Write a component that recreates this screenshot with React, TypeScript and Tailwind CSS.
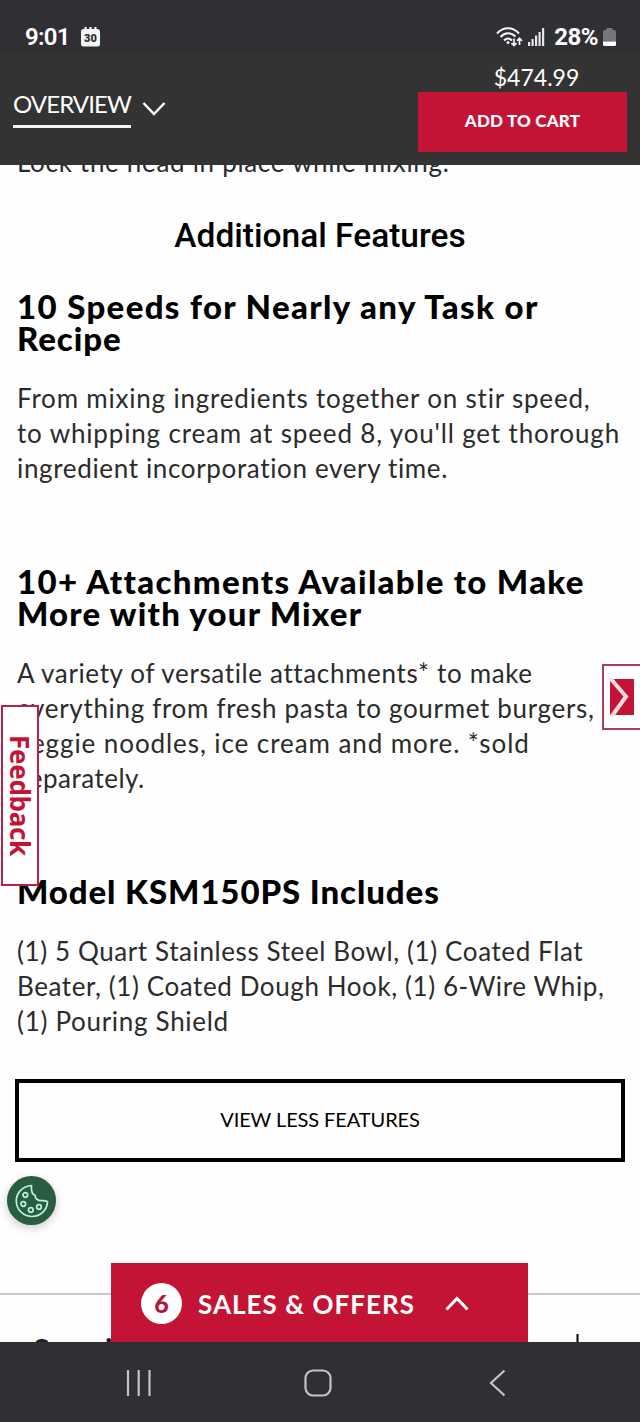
import type { ReactNode } from "react";

/* ─── Product copy ─── */
interface Line {
  text: string;
  tracking: string;
}

interface Feature {
  heading: Line[];
  body: Line[];
  spacing: string;
}

const FEATURES: Feature[] = [
  {
    heading: [
      { text: "10 Speeds for Nearly any Task or", tracking: "tracking-[1.35px]" },
      { text: "Recipe", tracking: "tracking-[0.9px]" },
    ],
    body: [
      { text: "From mixing ingredients together on stir speed,", tracking: "tracking-[0.8px]" },
      { text: "to whipping cream at speed 8, you'll get thorough", tracking: "tracking-[0.84px]" },
      { text: "ingredient incorporation every time.", tracking: "tracking-[0.65px]" },
    ],
    spacing: "mt-[34px]",
  },
  {
    heading: [
      { text: "10+ Attachments Available to Make", tracking: "tracking-[1.3px]" },
      { text: "More with your Mixer", tracking: "tracking-[1.2px]" },
    ],
    body: [
      { text: "A variety of versatile attachments* to make", tracking: "tracking-[0.64px]" },
      { text: "everything from fresh pasta to gourmet burgers,", tracking: "tracking-[0.67px]" },
      { text: "veggie noodles, ice cream and more. *sold", tracking: "tracking-[0.92px]" },
      { text: "separately.", tracking: "tracking-[0.5px]" },
    ],
    spacing: "mt-[79px]",
  },
  {
    heading: [{ text: "Model KSM150PS Includes", tracking: "tracking-[0.9px]" }],
    body: [
      { text: "(1) 5 Quart Stainless Steel Bowl, (1) Coated Flat", tracking: "tracking-[0.6px]" },
      { text: "Beater, (1) Coated Dough Hook, (1) 6-Wire Whip,", tracking: "tracking-[0.59px]" },
      { text: "(1) Pouring Shield", tracking: "tracking-[0.7px]" },
    ],
    spacing: "mt-[79px]",
  },
];

function TextLine({ line }: { line: Line }) {
  return <span className={`block whitespace-nowrap ${line.tracking}`}>{line.text}</span>;
}

function BodyText({ children }: { children: ReactNode }) {
  return <p className="text-[26px] leading-[35px] text-[#2b2b2b]">{children}</p>;
}

function FeatureBlock({ feature }: { feature: Feature }) {
  return (
    <section className={feature.spacing}>
      <h3 className="mb-[27px] text-[33px] font-black leading-8 text-black">
        {feature.heading.map((line) => (
          <TextLine key={line.text} line={line} />
        ))}
      </h3>
      <BodyText>
        {feature.body.map((line) => (
          <TextLine key={line.text} line={line} />
        ))}
      </BodyText>
    </section>
  );
}

/* ─── Status bar icons ─── */
function CalendarIcon() {
  return (
    <svg className="ml-[11px]" width="19" height="20" viewBox="0 0 19 20">
      <path d="M2.500 2H3.500V0h2.200v2h2.700V0h2.200v2h2.700V0h2.200v2h1.200A2.500 2.500 0 0 1 19 4.500V17a2.500 2.500 0 0 1-2.500 2.500h-14A2.500 2.500 0 0 1 0 17V4.500A2.500 2.500 0 0 1 2.500 2Z" fill="#f4f4f4" />
      <text x="9.5" y="14.500" textAnchor="middle" fontFamily="Roboto, sans-serif" fontSize="11" fontWeight="900" fill="#2f2e33">30</text>
    </svg>
  );
}

function WifiIcon() {
  return (
    <svg width="27" height="20" viewBox="0 0 27 20" fill="none" stroke="#f4f4f4" strokeWidth="2">
      <path d="M1 6.500C7-.5 17-.5 23 6.500M4.500 10C9 5 15 5 19.500 9.500M8 13.500c2.500-2.700 5.500-2.700 8 0" />
      <circle cx="12" cy="15.500" r="1.500" fill="#f4f4f4" stroke="none" />
      <path d="M18 11.500v7m-2.500-2.300L18 18.500l2.500-2.300M23.500 18v-6.500M21 13.800l2.500-2.500 2.500 2.500" strokeWidth="1.700" />
    </svg>
  );
}

function SignalIcon() {
  return (
    <svg width="17" height="18" viewBox="0 0 17 18" fill="#e6e6e6">
      <rect x="0" y="14" width="2.200" height="4" />
      <rect x="3.500" y="11" width="2.200" height="7" />
      <rect x="7" y="7.500" width="2.200" height="10.500" />
      <rect x="10.500" y="4" width="2.200" height="14" />
      <rect x="14" y="0" width="2.200" height="18" />
    </svg>
  );
}

function BatteryIcon() {
  return (
    <svg width="13" height="18" viewBox="0 0 13 18">
      <path d="M3.500 0h6v2H11a2 2 0 0 1 2 2v9.500H0V4a2 2 0 0 1 2-2h1.500Z" fill="#77767a" />
      <path d="M0 13.500h13V16.500a1.500 1.500 0 0 1-1.500 1.500h-10A1.500 1.500 0 0 1 0 16.500Z" fill="#fff" />
    </svg>
  );
}

function CookieIcon() {
  return (
    <svg width="34" height="34" viewBox="0 0 34 34" fill="none" stroke="#b9f5d3" strokeWidth="1.700" strokeLinejoin="round">
      <path d="M16.500 1.500c-8.700.7-15.200 7-15.200 15.200C1.300 25.600 8.300 32.500 17 32.500S32.300 26 32.500 17.500c-2.500-.8-3.600-1-4.800-.9-5.500.4-7.700-2.200-7.500-5.100-3-1.200-4.200-4.700-3.700-10Z" />
      <circle cx="10.300" cy="11" r="2.300" />
      <circle cx="8.300" cy="20" r="2.300" />
      <circle cx="15.800" cy="26" r="2.300" />
      <circle cx="24" cy="23" r="2.300" />
    </svg>
  );
}

export default function App() {
  return (
    <div className="relative flex h-[1422px] w-[640px] flex-col overflow-hidden bg-[#fefefe] font-[Lato,sans-serif]">
      {/* ─── STATUS BAR ─── */}
      <div className="flex h-[54px] shrink-0 items-center bg-[#302f34] pl-[25px] pr-6 pt-[19px] font-[Roboto,sans-serif] text-white">
        <span className="text-[24px] font-semibold leading-none tracking-[-0.7px]">9:01</span>
        <CalendarIcon />
        <div className="ml-auto flex items-center">
          <WifiIcon />
          <span className="ml-[5px]"><SignalIcon /></span>
          <span className="ml-[9px] mr-[5px] text-[24px] font-bold leading-none tracking-[-0.5px]">28%</span>
          <BatteryIcon />
        </div>
      </div>

      {/* ─── STICKY PRODUCT HEADER ─── */}
      <header className="z-10 flex h-[111px] shrink-0 justify-between bg-[#333] pl-[13px] pr-[13px] text-white">
        <div className="flex items-start pt-[34px]">
          <span className="h-10 whitespace-nowrap border-b-[3px] border-[#f4f4f4] text-[24px] leading-[31px] tracking-[-0.9px]">OVERVIEW</span>
          <svg className="ml-[11px] mt-[13px]" width="24" height="16" viewBox="0 0 24 16" fill="none" stroke="#fff" strokeWidth="2.500">
            <path d="M1.500 2 12 13 22.500 2" />
          </svg>
        </div>
        <div className="flex w-[209px] flex-col">
          <span className="h-[38px] whitespace-nowrap pl-7 text-center text-[23px] leading-[47px]">$474.99</span>
          <button className="h-[60px] bg-[#c41436] pb-[3px] text-[17px] font-black leading-none tracking-[0.2px]">ADD TO CART</button>
        </div>
      </header>

      {/* ─── FEATURE COPY ─── */}
      <main className="flex flex-1 flex-col overflow-hidden">
        <div className="-mt-[20px] px-[17px]">
          <BodyText>
            <TextLine line={{ text: "Lock the head in place while mixing.", tracking: "tracking-[0.69px]" }} />
          </BodyText>
          <h2 className="mt-[36px] whitespace-nowrap text-center font-[Roboto,sans-serif] text-[33.5px] font-medium leading-10 text-black">
            Additional Features
          </h2>
          {FEATURES.map((feature) => (
            <FeatureBlock key={feature.heading[0].text} feature={feature} />
          ))}
        </div>
        <button className="mx-[15px] mt-[40px] h-[83px] shrink-0 border-4 border-black pb-1 text-[20px] leading-none tracking-[-0.1px] text-black">
          VIEW LESS FEATURES
        </button>

        {/* Next accordion row, mostly under the offers bar */}
        <div className="mt-[131px] flex h-[80px] shrink-0 items-start justify-between border-t-2 border-[#c9c9c9] pl-[33px] pr-[51px]">
          <span className="mt-[37px] text-[30px] font-bold leading-[34px] tracking-[2.1px] text-[#222]">Specifications</span>
          <svg className="mt-[39px]" width="23" height="23" viewBox="0 0 23 23" stroke="#000" strokeWidth="2">
            <path d="M11.500 0v23M0 11.500h23" />
          </svg>
        </div>
      </main>

      {/* ─── SYSTEM NAVIGATION ─── */}
      <nav className="z-10 flex h-20 shrink-0 items-center justify-between bg-[#302f34] pl-[126px] pr-[134px] pt-[2px]">
        <svg width="26" height="26" viewBox="0 0 26 26" stroke="#c4c3c7" strokeWidth="2.200">
          <path d="M2 0v26M12.700 0v26M23.500 0v26" />
        </svg>
        <svg className="mr-[6px]" width="28" height="28" viewBox="0 0 28 28" fill="none" stroke="#c4c3c7" strokeWidth="2.200">
          <rect x="1.500" y="1.500" width="25" height="25" rx="7.500" />
        </svg>
        <svg width="17" height="28" viewBox="0 0 17 28" fill="none" stroke="#c4c3c7" strokeWidth="2.200">
          <path d="M15.500 1.500 2 14l13.500 12.500" />
        </svg>
      </nav>

      {/* ─── FLOATING WIDGETS ─── */}
      <button className="absolute left-px top-[705px] flex h-[181px] w-[38px] items-center justify-center border-2 border-[#b82149] bg-white">
        <span className="font-['Noto_Sans',sans-serif] text-[26px] font-bold leading-none tracking-[-0.3px] text-[#c41436] [writing-mode:vertical-rl]">
          Feedback
        </span>
      </button>

      <button className="absolute left-[602px] top-[664px] flex h-[66px] w-10 items-center border-2 border-r-0 border-[#a8405c] bg-white pl-1">
        <svg width="26" height="38" viewBox="0 0 26 38">
          <path d="M2 1h24v36H2Z" fill="#c41436" />
          <path d="M2 0 18 18.500 4 38" fill="none" stroke="#fbdde3" strokeWidth="4" />
        </svg>
      </button>

      <button className="absolute left-[7px] top-[1176px] flex size-[49px] items-center justify-center rounded-full bg-[#285c44] shadow-[0_3px_10px_rgba(0,0,0,0.2)]">
        <CookieIcon />
      </button>

      <button className="absolute left-[111px] top-[1263px] flex h-[79px] w-[417px] items-center bg-[#c41436] pl-[30px] pt-0.5 text-white">
        <span className="flex size-[41px] items-center justify-center rounded-full bg-white text-[25px] font-black leading-none text-[#b5143d]">6</span>
        <span className="ml-[16px] whitespace-nowrap text-[26px] font-bold leading-none tracking-[1.05px]">SALES &amp; OFFERS</span>
        <svg className="ml-[30px]" width="24" height="15" viewBox="0 0 24 15" fill="none" stroke="#fff" strokeWidth="3">
          <path d="M1.500 13.500 12 2.500l10.500 11" />
        </svg>
      </button>
    </div>
  );
}
